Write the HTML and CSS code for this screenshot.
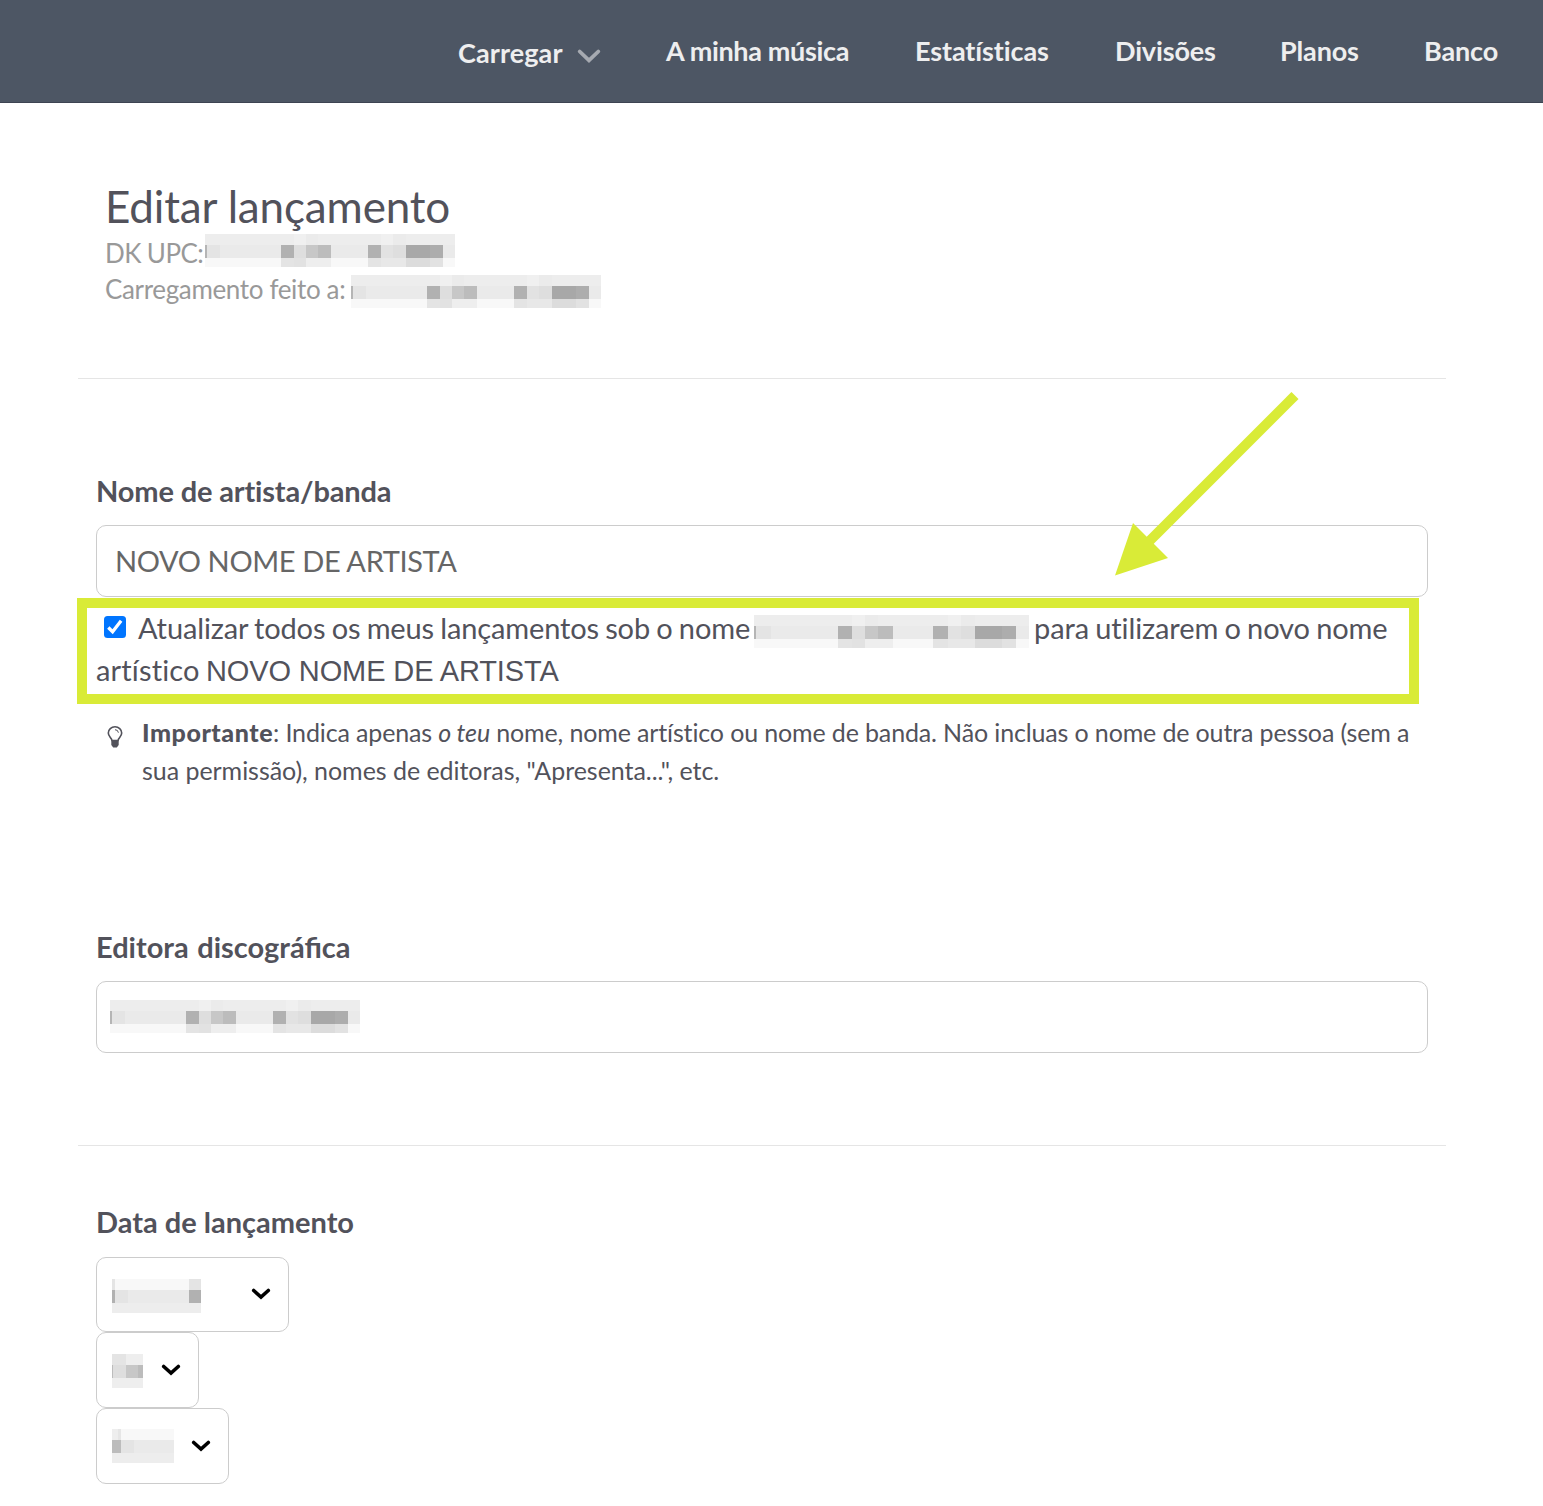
FILE: index.html
```html
<!DOCTYPE html>
<html lang="pt">
<head>
<meta charset="utf-8">
<title>Editar lançamento</title>
<link rel="stylesheet" href="styles.css">
</head>
<body>
<svg class="defs" width="0" height="0" aria-hidden="true">
  <symbol id="mosaic" viewBox="0 0 250 33" preserveAspectRatio="none">
    <g shape-rendering="crispEdges">
      <path fill="#ededed" d="M0 0h250v11H0z"/>
      <path fill="#f0f0f0" d="M89 0h12v11H89zM176 0h12v11h-12z"/>
      <path fill="#ebebeb" d="M101 0h12v11h-12zM188 0h13v11h-13z"/>
      <path fill="#eaeaea" d="M0 11h250v13H0z"/>
      <path fill="#f8f8f8" d="M0 24h250v9H0z"/>
      <path fill="#b5b5b5" d="M0 11h2v13H0z"/>
      <path fill="#e4e4e4" d="M2 11h13v13H2zM76 24h13v9H76zM163 24h13v9h-13z"/>
      <path fill="#b1b1b1" d="M76 11h13v13H76zM163 11h13v13h-13z"/>
      <path fill="#dedede" d="M89 11h12v13H89zM188 11h13v13h-13z"/>
      <path fill="#c7c7c7" d="M101 11h12v13h-12z"/>
      <path fill="#bcbcbc" d="M113 11h13v13h-13z"/>
      <path fill="#e2e2e2" d="M89 24h12v9H89zM176 11h12v13h-12zM225 24h13v9h-13z"/>
      <path fill="#eeeeee" d="M101 24h25v9h-25z"/>
      <path fill="#e8e8e8" d="M176 24h25v9h-25z"/>
      <path fill="#a8a8a8" d="M201 11h24v13h-24z"/>
      <path fill="#adadad" d="M225 11h13v13h-13z"/>
      <path fill="#dcdcdc" d="M201 24h24v9h-24z"/>
    </g>
  </symbol>
  <symbol id="chevron" viewBox="0 0 20 12">
    <path d="M2.7 2.5 10 9l7.3-6.5" fill="none" stroke="currentColor" stroke-width="3.6" stroke-linecap="round" stroke-linejoin="miter"/>
  </symbol>
</svg>

<nav class="topbar">
  <a class="nav-item nav-upload"><span class="nav-text">Carregar</span>
    <svg class="nav-chevron" viewBox="0 0 24 16"><path d="M2.7 3.5 12 12.400l9.300-8.900" fill="none" stroke="currentColor" stroke-width="3.8" stroke-linecap="round"/></svg>
  </a>
  <a class="nav-item nav-music">A minha música</a>
  <a class="nav-item nav-stats">Estatísticas</a>
  <a class="nav-item nav-splits">Divisões</a>
  <a class="nav-item nav-plans">Planos</a>
  <a class="nav-item nav-bank">Banco</a>
</nav>

<main class="page">
  <header class="release-head">
    <h1 class="title">Editar lançamento</h1>
    <div class="meta meta-upc"><span class="meta-label">DK UPC:</span><svg class="mosaic"><use href="#mosaic"/></svg></div>
    <div class="meta meta-date"><span class="meta-label">Carregamento feito a:</span><svg class="mosaic"><use href="#mosaic"/></svg></div>
  </header>

  <section class="artist">
    <h2 class="label">Nome de artista/banda</h2>
    <div class="field">NOVO NOME DE ARTISTA</div>
    <div class="update-box">
      <div class="update-line">
        <svg class="checkbox" viewBox="0 0 22 22"><rect width="22" height="22" rx="3.5" fill="#0075ff"/><path d="M4.300 11.500l4.300 4.200 8.500-11" fill="none" stroke="#fff" stroke-width="3.300"/></svg>
        <span class="update-start">Atualizar todos os meus lançamentos sob o nome</span>
        <svg class="mosaic mosaic-wide"><use href="#mosaic"/></svg>
        <span class="update-end">para utilizarem o novo nome</span>
      </div>
      <div class="update-line"><span class="update-word">artístico</span><span class="new-name">NOVO NOME DE ARTISTA</span></div>
    </div>
    <div class="hint">
      <svg class="bulb" viewBox="0 0 16 22"><path d="M5 14.500C4.600 11.800 1.300 10.600 1.300 7a6.700 6.200 0 0 1 13.400 0c0 3.600-3.300 4.800-3.700 7.500z" fill="none" stroke="currentColor" stroke-width="1.6"/><path d="M8 3.700q3 0 3.400 3" fill="none" stroke="currentColor" stroke-width="1"/><path d="M4.300 14h7.400v5L9.800 21.500H6.200L4.300 19z" fill="currentColor"/></svg>
      <p class="hint-text"><span class="hint-first"><b>Importante</b>: Indica apenas <i>o teu</i> nome, nome artístico ou nome de banda. Não incluas o nome de outra pessoa (sem a</span><br>sua permissão), nomes de editoras, "Apresenta...", etc.</p>
    </div>
    <svg class="arrow" viewBox="0 0 186 184"><path d="M180 1.500 34 147.500" stroke="#d9eb37" stroke-width="10"/><path d="M0 181.500 18 129 53 164z" fill="#d9eb37"/></svg>
  </section>

  <section class="record-label">
    <h2 class="label">Editora discográfica</h2>
    <div class="field field-redacted"><svg class="mosaic"><use href="#mosaic"/></svg></div>
  </section>

  <section class="release-date">
    <h2 class="label">Data de lançamento</h2>
    <div class="select select-month">
      <svg class="redacted" width="89" height="34" shape-rendering="crispEdges"><path fill="#f8f8f8" d="M0 0h89v11H0z"/><path fill="#eaeaea" d="M0 11h89v13H0z"/><path fill="#ededed" d="M0 24h89v10H0z"/><path fill="#e4e4e4" d="M0 0h3v11H0zM77 0h12v11H77zM3 11h13v13H3z"/><path fill="#b1b1b1" d="M0 11h3v13H0zM77 11h12v13H77z"/></svg>
      <svg class="select-chevron"><use href="#chevron"/></svg>
    </div>
    <div class="select select-day">
      <svg class="redacted" width="31" height="34" shape-rendering="crispEdges"><path fill="#e4e4e4" d="M0 0h14v11H0z"/><path fill="#eeeeee" d="M14 0h17v11H14zM0 24h31v10H0z"/><path fill="#dedede" d="M0 11h14v13H0z"/><path fill="#c7c7c7" d="M14 11h12v13H14z"/><path fill="#bcbcbc" d="M0 11h1v13H0zM26 11h5v13h-5z"/></svg>
      <svg class="select-chevron"><use href="#chevron"/></svg>
    </div>
    <div class="select select-year">
      <svg class="redacted" width="62" height="34" shape-rendering="crispEdges"><path fill="#f8f8f8" d="M0 0h62v11H0z"/><path fill="#eeeeee" d="M0 0h6v11H0z"/><path fill="#e6e6e6" d="M6 0h3v11H6z"/><path fill="#eaeaea" d="M0 11h62v13H0z"/><path fill="#bcbcbc" d="M0 11h9v13H0z"/><path fill="#e4e4e4" d="M9 11h13v13H9z"/><path fill="#ededed" d="M0 24h62v10H0z"/></svg>
      <svg class="select-chevron"><use href="#chevron"/></svg>
    </div>
  </section>
</main>
</body>
</html>
```

FILE: styles.css
```css
* { box-sizing: border-box; }
body {
  margin: 0;
  background: #fff;
  color: #52525b;
  font-family: Lato, "Liberation Sans", sans-serif;
  font-variant-ligatures: none;
}
h1, h2, p { margin: 0; }
svg { display: block; flex: none; }
.defs { position: absolute; }

.topbar {
  display: flex;
  justify-content: flex-end;
  gap: 65px;
  height: 103px;
  padding: 34px 45px 0 0;
  background: #4d5664;
  border-bottom: 1px solid #3d4452;
}
.nav-item {
  color: #eeeeef;
  font-size: 27px;
  font-weight: 700;
  line-height: 34px;
  letter-spacing: -0.15px;
  white-space: nowrap;
}
.nav-upload { display: flex; padding-top: 2px; letter-spacing: 0.1px; }
.nav-text { width: 119px; }
.nav-music { width: 184px; letter-spacing: -0.35px; }
.nav-stats { width: 135px; letter-spacing: -0.1px; }
.nav-splits { width: 100px; }
.nav-plans { width: 79px; }
.nav-bank { width: 74px; }
.nav-chevron { width: 24px; height: 16px; margin-top: 12px; color: #a6aab1; }

.page { width: 1368px; margin-left: 78px; }

.release-head {
  height: 276px;
  padding: 75px 0 0 27px;
  border-bottom: 1px solid #e5e5e5;
}
.title {
  height: 56px;
  font-size: 44px;
  font-weight: 400;
  line-height: 57px;
  letter-spacing: -0.15px;
  white-space: nowrap;
}
.meta { display: flex; height: 36px; font-size: 26px; line-height: 38px; color: #999; }
.meta-label { white-space: nowrap; }
.mosaic { width: 250px; height: 33px; }
.meta-upc .meta-label { width: 100px; letter-spacing: -0.6px; }
.meta-date .meta-label { width: 246px; letter-spacing: -0.35px; }
.meta-date .mosaic { margin-top: 5px; }

.label {
  height: 40px;
  font-size: 29px;
  font-weight: 700;
  line-height: 38px;
}
.field {
  width: 1332px;
  height: 72px;
  margin-top: 13px;
  padding-left: 18px;
  border: 1px solid #ccc;
  border-radius: 10px;
  color: #666;
  font-size: 29px;
  line-height: 70px;
  letter-spacing: -0.37px;
}
.field-redacted { padding: 18px 0 0 13px; }

.artist { position: relative; height: 549px; padding: 93px 0 0 18px; }
.artist .label { letter-spacing: -0.15px; }
.update-box {
  width: 1342px;
  height: 106px;
  margin: 1px 0 0 -19px;
  padding: 0 0 0 9px;
  border: 10px solid #d9eb37;
  font-size: 29px;
}
.update-line { display: flex; height: 42px; line-height: 40px; white-space: nowrap; }
.checkbox { width: 22px; height: 22px; margin: 8px 12px 0 8px; }
.update-start { width: 616px; letter-spacing: -0.14px; word-spacing: -1px; }
.update-end { letter-spacing: -0.11px; word-spacing: -1px; }
.mosaic-wide { width: 275px; margin: 7px 5px 0 0; }
.update-word { width: 110px; letter-spacing: 0.15px; }
.new-name { font-family: "Liberation Sans", Arial, sans-serif; letter-spacing: -0.12px; line-height: 42px; }
.hint { display: flex; margin-top: 10px; padding-left: 11px; }
.bulb { width: 16px; height: 22px; margin: 12px 19px 0 0; }
.hint-text { margin-top: -1px; font-size: 25px; line-height: 38px; letter-spacing: -0.04px; white-space: nowrap; }
.hint-first { letter-spacing: -0.14px; }
.hint-text b { font-weight: 900; letter-spacing: 0.55px; }
.arrow { position: absolute; left: 1037px; top: 15px; width: 186px; height: 184px; overflow: visible; }

.record-label { height: 218px; padding: 0 0 0 18px; border-bottom: 1px solid #e5e5e5; }
.record-label .label { font-variant-ligatures: normal; word-spacing: 1.5px; }

.release-date { padding: 57px 0 22px 18px; }
.select {
  display: flex;
  justify-content: space-between;
  height: 75px;
  padding: 21px 17px 0 15px;
  border: 1px solid #ccc;
  border-radius: 10px;
}
.select-month { width: 193px; margin-top: 14px; }
.select-day { width: 103px; height: 76px; }
.select-year { width: 133px; height: 76px; padding-top: 20px; }
.select-chevron { width: 20px; height: 12px; margin-top: 9px; color: #000; }
.select-day .select-chevron { margin-top: 10px; }
.select-year .select-chevron { margin-top: 11px; }
```
